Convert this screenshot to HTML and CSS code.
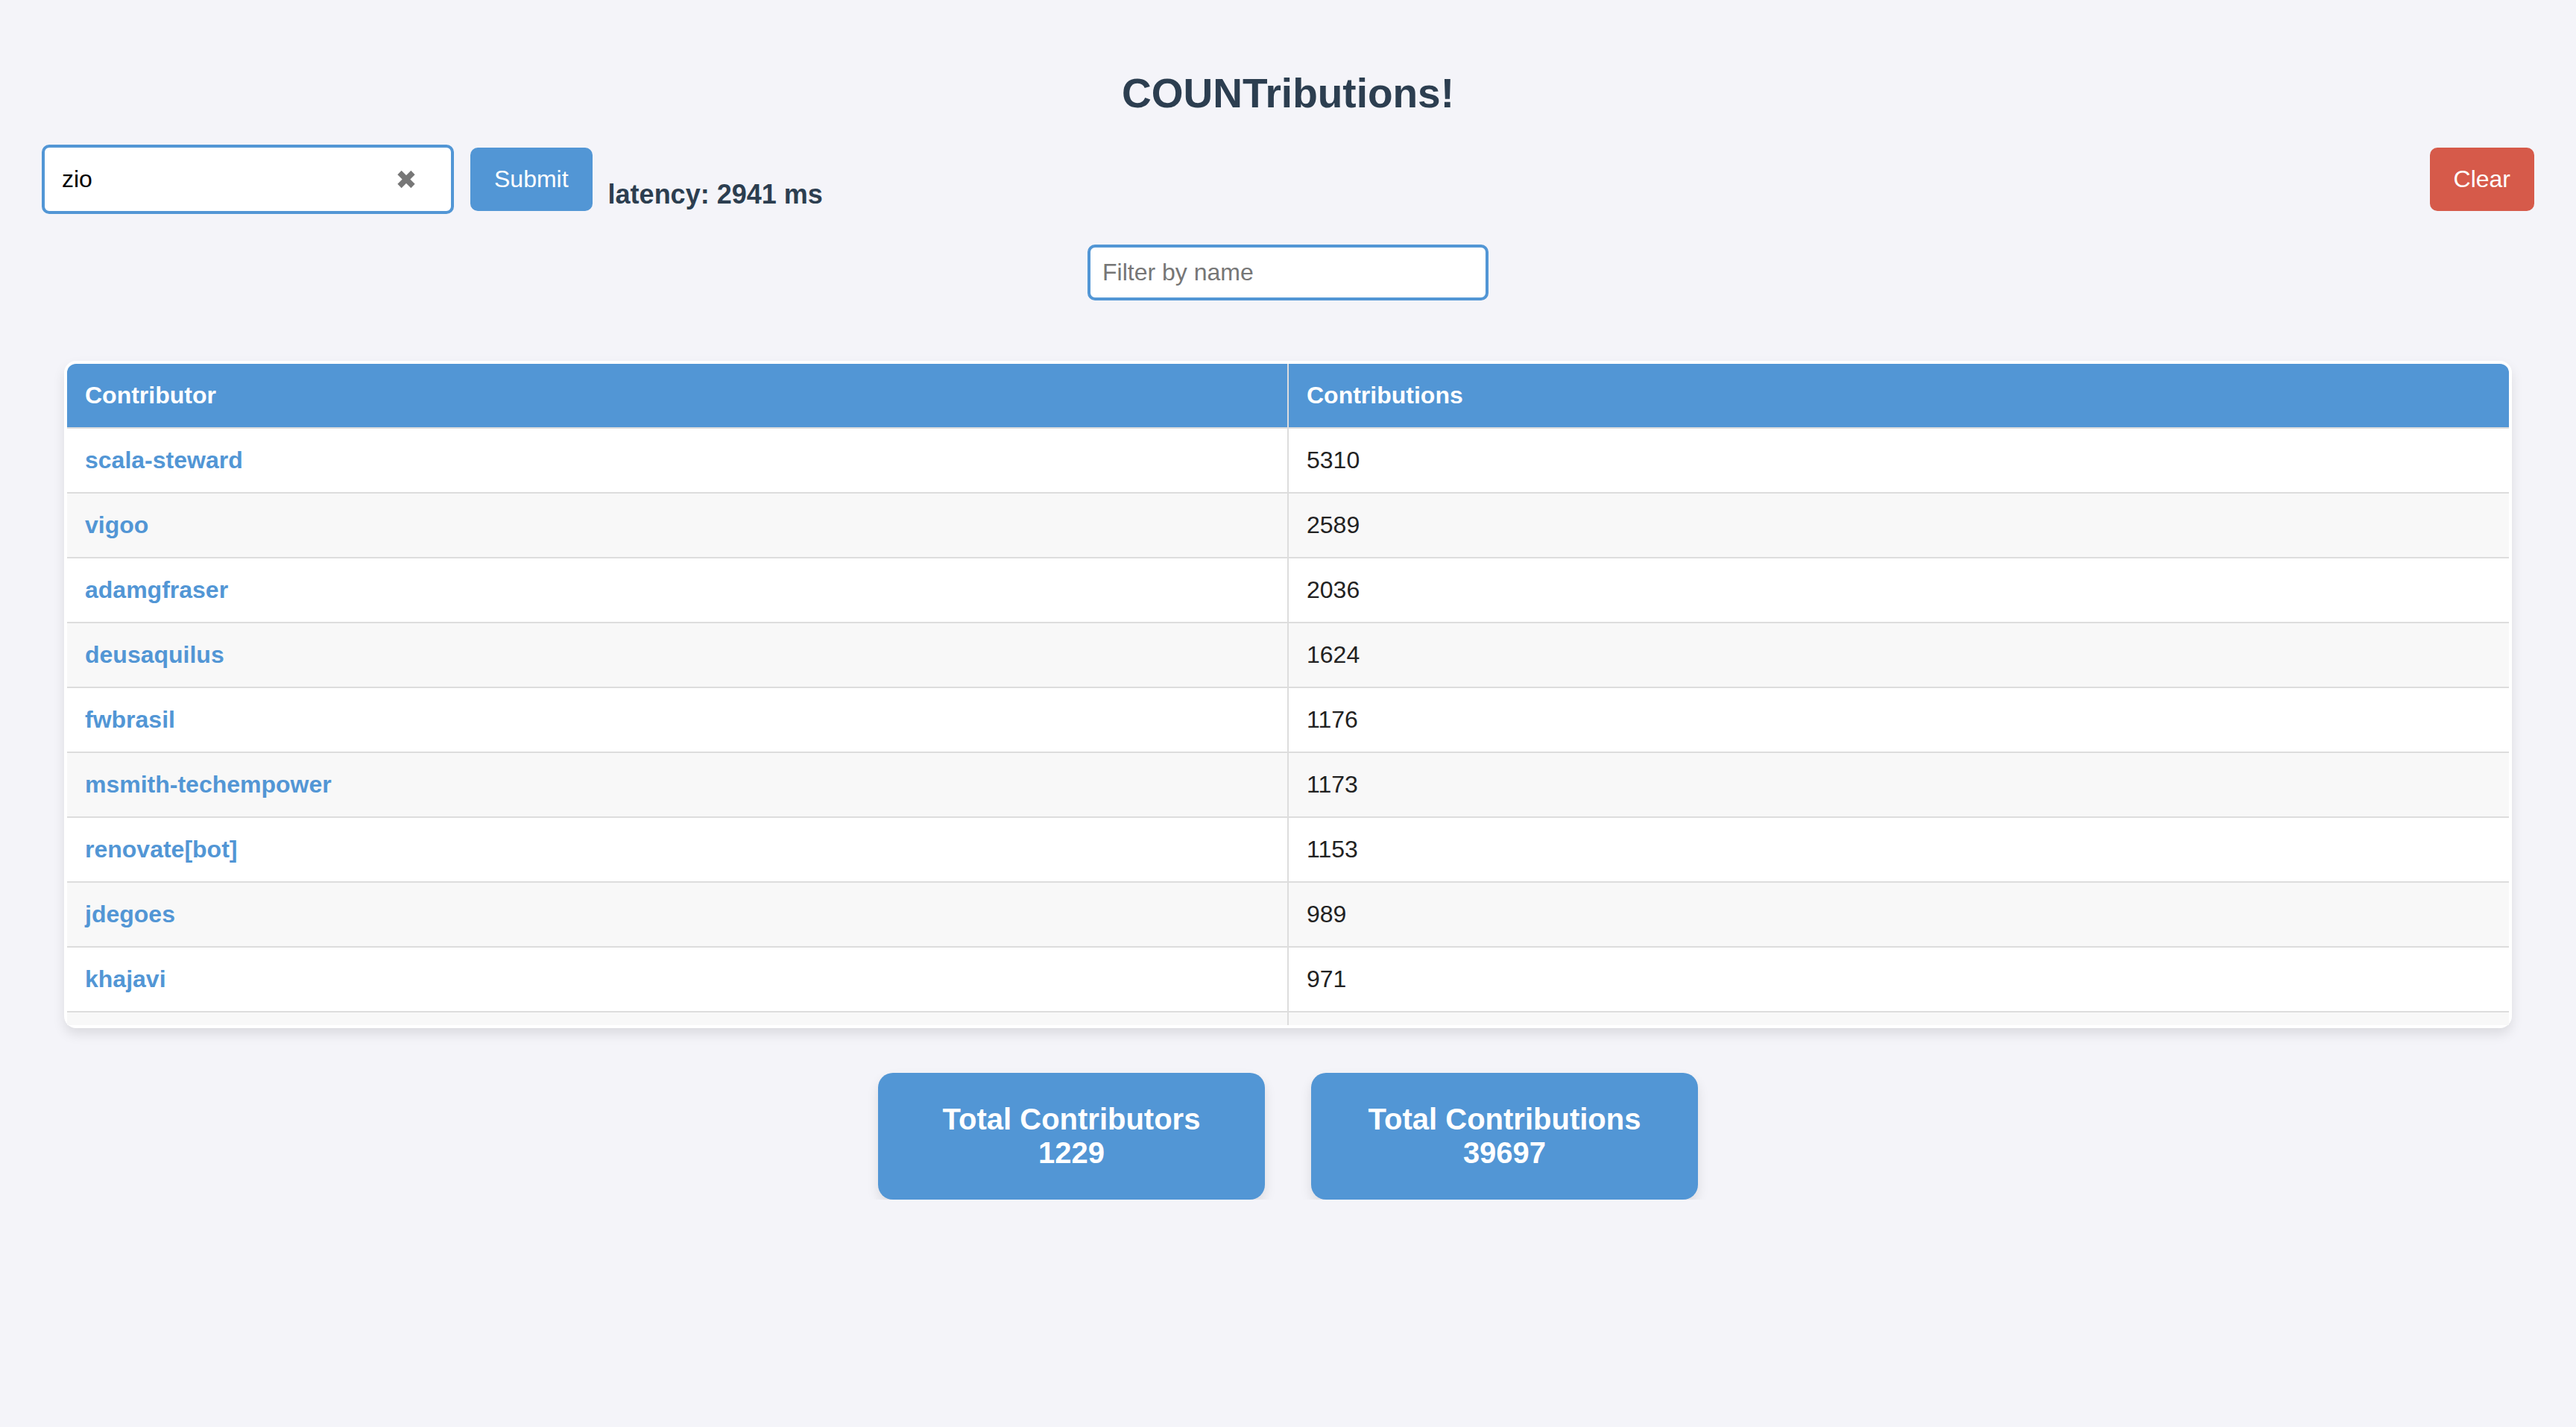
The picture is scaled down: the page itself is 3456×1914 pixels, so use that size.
FILE: index.html
```html
<!DOCTYPE html>
<html lang="en">
<head>
<meta charset="utf-8">
<title>COUNTributions!</title>
<link rel="stylesheet" href="styles.css">
</head>
<body>
<div class="app">
  <h1 class="title">COUNTributions!</h1>

  <div class="toolbar">
    <div class="search-group">
      <div class="search-field">
        <input class="search-input" type="text" value="zio">
        <span class="clear-x" aria-hidden="true">
          <svg width="26" height="25" viewBox="0 0 26 25">
            <line x1="4" y1="3.5" x2="22" y2="21.5" stroke="#777" stroke-width="7.5"/>
            <line x1="22" y1="3.5" x2="4" y2="21.5" stroke="#777" stroke-width="7.5"/>
          </svg>
        </span>
      </div>
      <button class="btn btn-submit" type="button">Submit</button>
      <span class="latency">latency: 2941 ms</span>
    </div>
    <button class="btn btn-clear" type="button">Clear</button>
  </div>

  <div class="filter-row">
    <input class="filter-input" type="text" placeholder="Filter by name">
  </div>

  <div class="table-card">
    <div class="table-scroll">
      <table class="contrib-table">
        <thead>
          <tr><th>Contributor</th><th>Contributions</th></tr>
        </thead>
        <tbody>
          <tr><td><a href="#">scala-steward</a></td><td>5310</td></tr>
          <tr><td><a href="#">vigoo</a></td><td>2589</td></tr>
          <tr><td><a href="#">adamgfraser</a></td><td>2036</td></tr>
          <tr><td><a href="#">deusaquilus</a></td><td>1624</td></tr>
          <tr><td><a href="#">fwbrasil</a></td><td>1176</td></tr>
          <tr><td><a href="#">msmith-techempower</a></td><td>1173</td></tr>
          <tr><td><a href="#">renovate[bot]</a></td><td>1153</td></tr>
          <tr><td><a href="#">jdegoes</a></td><td>989</td></tr>
          <tr><td><a href="#">khajavi</a></td><td>971</td></tr>
          <tr class="row-partial"><td>&nbsp;</td><td>&nbsp;</td></tr>
        </tbody>
      </table>
    </div>
  </div>

  <div class="totals">
    <div class="total-card">Total Contributors<br>1229</div>
    <div class="total-card">Total Contributions<br>39697</div>
  </div>
</div>
</body>
</html>
```

FILE: styles.css
```css
html, body {
  margin: 0;
  padding: 0;
}

body {
  background: #f4f4f9;
  font-family: "Liberation Sans", Arial, Helvetica, sans-serif;
  color: #333;
}

.app {
  padding: 95px 56px 0;
}

.title {
  margin: 0 0 39px;
  text-align: center;
  font-size: 55px;
  line-height: 60px;
  font-weight: bold;
  color: #2c3e50;
}

.toolbar {
  display: flex;
  justify-content: space-between;
  align-items: flex-start;
}

.search-group {
  display: flex;
  align-items: flex-start;
  gap: 22px;
}

.search-field {
  position: relative;
  width: 553px;
  height: 93px;
  box-sizing: border-box;
  border: 4px solid #5296d5;
  border-radius: 10px;
  background: #fff;
  display: flex;
  align-items: center;
}

.search-input {
  flex: 1;
  min-width: 0;
  border: none;
  outline: none;
  background: transparent;
  font-family: "Liberation Sans", Arial, sans-serif;
  font-size: 32px;
  color: #000;
  padding: 0 60px 0 23px;
  height: 100%;
}

.clear-x {
  position: absolute;
  left: 472px;
  top: 30px;
  width: 26px;
  height: 25px;
  display: block;
}

.clear-x svg {
  display: block;
}

.btn {
  border: none;
  border-radius: 10px;
  color: #fff;
  font-family: "Liberation Sans", Arial, sans-serif;
  font-size: 32px;
  height: 85px;
  padding: 0 32px;
  margin-top: 4px;
  cursor: pointer;
}

.btn-submit {
  background: #5296d5;
}

.btn-clear {
  background: #d65a4a;
}

.latency {
  margin-top: 46px;
  margin-left: -1px;
  font-size: 36px;
  font-weight: bold;
  color: #2c3e50;
  line-height: 41px;
}

.filter-row {
  display: flex;
  justify-content: center;
  margin-top: 41px;
}

.filter-input {
  width: 538px;
  height: 75px;
  box-sizing: border-box;
  border: 4px solid #5296d5;
  border-radius: 10px;
  padding: 0 16px;
  font-family: "Liberation Sans", Arial, sans-serif;
  font-size: 32px;
  color: #000;
  background: #fff;
  outline: none;
}

.filter-input::placeholder {
  color: #767676;
}

.table-card {
  margin: 81px 30px 0;
  padding: 4px;
  background: #fff;
  border-radius: 16px;
  box-shadow: 0 8px 16px rgba(0, 0, 0, 0.1);
}

.table-scroll {
  height: 887px;
  overflow: hidden;
  border-radius: 12px 12px 0 0;
}

.contrib-table {
  width: 100%;
  border-collapse: collapse;
  table-layout: fixed;
}

.contrib-table th,
.contrib-table td {
  text-align: left;
  padding: 24px;
  font-size: 32px;
  line-height: 37px;
  border-bottom: 2px solid #ddd;
}

.contrib-table th {
  background: #5296d5;
  color: #fff;
  font-weight: bold;
}

.contrib-table th:first-child,
.contrib-table td:first-child {
  border-right: 2px solid #ddd;
}

.contrib-table tbody tr {
  background: #fff;
}

.contrib-table tbody tr:nth-child(even) {
  background: #f8f8f8;
}

.contrib-table td {
  color: #222;
}

.contrib-table a {
  color: #5296d5;
  font-weight: bold;
  text-decoration: none;
}

.totals {
  display: flex;
  justify-content: center;
  gap: 62px;
  margin-top: 60px;
}

.total-card {
  width: 519px;
  box-sizing: border-box;
  padding: 40px 0;
  background: #5296d5;
  color: #fff;
  border-radius: 20px;
  text-align: center;
  font-size: 40px;
  line-height: 45px;
  font-weight: bold;
  box-shadow: 0 8px 16px rgba(0, 0, 0, 0.1);
}
```
